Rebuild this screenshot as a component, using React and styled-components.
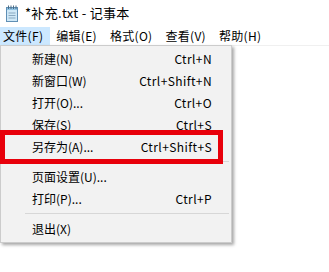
import styled, { createGlobalStyle } from "styled-components";

const GlobalStyle = createGlobalStyle`
  html, body {
    margin: 0;
    padding: 0;
    background: #ffffff;
  }
  body {
    font-family: "Noto Sans CJK SC", "Noto Sans", sans-serif;
    font-size: 12px;
    color: #000000;
  }
`;

const Window = styled.div`
  position: relative;
  width: 329px;
  height: 272px;
  overflow: hidden;
  background: #ffffff;
  display: flex;
  flex-direction: column;
`;

const TitleBar = styled.div`
  height: 27px;
  display: flex;
  align-items: center;
  gap: 6px;
  padding-left: 5px;
`;

const TitleText = styled.span`
  font-size: 13px;
  line-height: 1;
  margin-top: -2px;
  letter-spacing: 0.3px;
`;

const MenuBar = styled.div`
  height: 18px;
  display: flex;
  align-items: stretch;
  gap: 3px;
  border-bottom: 1px solid #f0f0f0;
`;

const MenuButton = styled.div`
  display: flex;
  align-items: center;
  padding: 0 6px 0 2px;
  line-height: 1;
  letter-spacing: 0.3px;
  background: ${(p) => (p.$active ? "#cce8ff" : "transparent")};
  border: 1px solid ${(p) => (p.$active ? "#cce8ff" : "transparent")};
`;

const Editor = styled.div`
  flex: 1;
`;

const Dropdown = styled.div`
  position: absolute;
  left: 0;
  top: 45px;
  width: 230px;
  background: #f2f2f2;
  border: 1px solid #cccccc;
  padding: 2px 0;
  box-shadow: 2px 2px 3px rgba(0, 0, 0, 0.35);
`;

const Item = styled.div`
  height: 22px;
  display: flex;
  align-items: center;
  justify-content: space-between;
  padding: 0 19px 0 31px;
  line-height: 1;
`;

const Shortcut = styled.span`
  letter-spacing: 0.4px;
`;

const Separator = styled.div`
  height: 1px;
  background: #d7d7d7;
  margin: 3px 2px 4px 24px;
`;

const Highlight = styled.div`
  position: absolute;
  left: 0;
  top: 130px;
  width: 213px;
  height: 24px;
  border: 5px solid #e8000b;
  pointer-events: none;
`;

const NotepadIcon = () => (
  <svg width="14" height="17" viewBox="0 0 14 17">
    <rect x="1.5" y="2.5" width="11" height="14" fill="#cfe8f7" stroke="#5f8fb5" />
    <rect x="2" y="3" width="10" height="2" fill="#8fc3e4" />
    <line x1="3.5" y1="8" x2="10.5" y2="8" stroke="#8aa9c0" />
    <line x1="3.5" y1="10.5" x2="10.5" y2="10.5" stroke="#8aa9c0" />
    <line x1="3.5" y1="13" x2="10.5" y2="13" stroke="#8aa9c0" />
    {[3, 5.5, 8, 10.5].map((x) => (
      <rect key={x} x={x} y="0.5" width="1" height="3.5" fill="#4c6d86" />
    ))}
  </svg>
);

const menus = ["文件(F)", "编辑(E)", "格式(O)", "查看(V)", "帮助(H)"];

const items = [
  { label: "新建(N)", key: "Ctrl+N" },
  { label: "新窗口(W)", key: "Ctrl+Shift+N" },
  { label: "打开(O)...", key: "Ctrl+O" },
  { label: "保存(S)", key: "Ctrl+S" },
  { label: "另存为(A)...", key: "Ctrl+Shift+S" },
  { sep: true },
  { label: "页面设置(U)...", key: "" },
  { label: "打印(P)...", key: "Ctrl+P" },
  { sep: true },
  { label: "退出(X)", key: "" },
];

const App = () => {
  return (
    <>
      <GlobalStyle />
      <Window>
        <TitleBar>
          <NotepadIcon />
          <TitleText>*补充.txt - 记事本</TitleText>
        </TitleBar>
        <MenuBar>
          {menus.map((m, i) => (
            <MenuButton key={m} $active={i === 0}>
              {m}
            </MenuButton>
          ))}
        </MenuBar>
        <Editor />
        <Dropdown>
          {items.map((it, i) =>
            it.sep ? (
              <Separator key={i} />
            ) : (
              <Item key={i}>
                <span>{it.label}</span>
                <Shortcut>{it.key}</Shortcut>
              </Item>
            )
          )}
        </Dropdown>
        <Highlight />
      </Window>
    </>
  );
};

export default App;
